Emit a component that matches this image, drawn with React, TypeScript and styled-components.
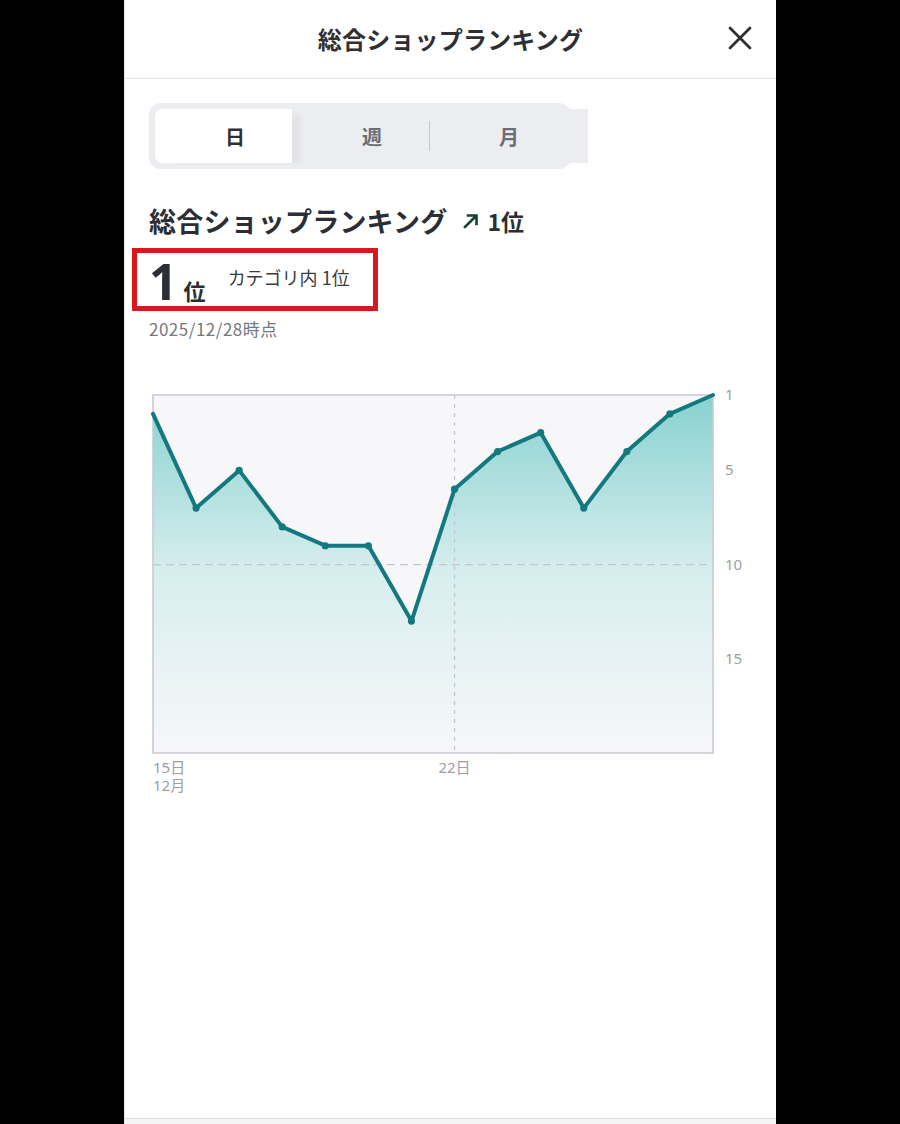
import React from "react";
import styled, { createGlobalStyle } from "styled-components";

const Global = createGlobalStyle`
  html, body { margin: 0; padding: 0; background: #000; }
  body { font-family: "Noto Sans CJK JP", "Noto Sans", sans-serif; }
  * { box-sizing: border-box; }
`;

const Panel = styled.div`
  width: 652px;
  height: 1124px;
  margin: 0 auto;
  background: #fff;
  display: flex;
  flex-direction: column;
  border-left: 1px solid #e6e6e6;
`;

const Header = styled.header`
  height: 79px;
  flex: none;
  border-bottom: 1px solid #e2e2e4;
  display: flex;
  align-items: center;
  justify-content: center;
  position: relative;
`;

const HeaderTitle = styled.h1`
  margin: 0 0 2px;
  font-size: 24px;
  font-weight: 700;
  color: #2f3033;
  letter-spacing: 0.2px;
`;

const CloseButton = styled.button`
  position: absolute;
  right: 21px;
  top: 23px;
  width: 30px;
  height: 30px;
  padding: 0;
  border: none;
  background: none;
  display: flex;
  align-items: center;
  justify-content: center;
`;

const Main = styled.main`
  flex: 1;
  padding: 24px 0 0 24px;
  display: flex;
  flex-direction: column;
  align-items: flex-start;
`;

const SegmentRow = styled.div`
  display: flex;
  align-items: center;
`;

const Track = styled.div`
  position: relative;
  width: 422px;
  height: 66px;
  padding: 6px;
  border-radius: 12px;
  background: #ecedf1;
  display: grid;
  grid-template-columns: 160px 114px 1px 135px;
  align-items: center;
`;

const Stub = styled.div`
  width: 19px;
  height: 54px;
  margin-left: -2px;
  background: #ecedf1;
`;

const Thumb = styled.div`
  position: absolute;
  left: 6px;
  top: 6px;
  width: 137px;
  height: 54px;
  background: #fff;
  border-radius: 8px 0 0 8px;
  box-shadow: 12px 3px 5px -3px rgba(0, 0, 0, 0.04);
`;

const Tab = styled.div<{ $active?: boolean; $shift?: number }>`
  position: relative;
  text-align: center;
  padding-left: ${(p) => p.$shift ?? 0}px;
  font-size: 20px;
  font-weight: 700;
  color: ${(p) => (p.$active ? "#2f3033" : "#6b6d72")};
`;

const Divider = styled.div`
  width: 1px;
  height: 30px;
  background: #c7c8cc;
`;

const TitleRow = styled.div`
  margin-top: 32px;
  display: flex;
  align-items: center;
  gap: 7px;
`;

const SectionTitle = styled.h2`
  margin: 0 8px 0 0;
  font-size: 27px;
  font-weight: 700;
  color: #2b2e35;
  letter-spacing: 0.2px;
`;

const TrendValue = styled.span`
  font-size: 23px;
  font-weight: 700;
  color: #2b2e35;
`;

const RankBox = styled.div`
  margin: 8px 0 0 -17px;
  width: 246px;
  height: 63px;
  border: 5px solid #d7191f;
  padding: 0 0 0 12px;
  display: flex;
  align-items: baseline;
`;

const BigRank = styled.span`
  font-family: "Noto Sans", "Noto Sans CJK JP", sans-serif;
  font-size: 50px;
  font-weight: 700;
  line-height: 56px;
  color: #2b2e35;
`;

const RankUnit = styled.span`
  margin-left: 6px;
  font-size: 22px;
  font-weight: 700;
  color: #2b2e35;
`;

const CategoryRank = styled.span`
  margin-left: 22px;
  font-size: 18px;
  color: #3a3c40;
  align-self: center;
  margin-top: -6px;
`;

const DateText = styled.div`
  margin-top: 5px;
  font-size: 17px;
  letter-spacing: 0.5px;
  color: #76787c;
`;

const ChartSvg = styled.svg`
  margin-top: 39px;
  display: block;
`;

const Footer = styled.footer`
  height: 6px;
  flex: none;
  border-top: 1px solid #dcdcde;
  background: #f5f5f6;
`;

const ranks = [2, 7, 5, 8, 9, 9, 13, 6, 4, 3, 7, 4, 2, 1];
const PL = 4;
const PR = 564;
const PT = 15;
const PB = 373;
const yOf = (r: number) => PT + ((r - 1) * (PB - PT)) / 19;
const xOf = (i: number) => PL + (i * (PR - PL)) / (ranks.length - 1);

function Chart() {
  const pts = ranks.map((r, i) => [xOf(i), yOf(r)] as const);
  const line = pts.map((p) => `${p[0].toFixed(1)},${p[1].toFixed(1)}`).join(" ");
  const area = `${PL},${PB} ${line} ${PR},${PB}`;
  const labelStyle = { fontFamily: '"Noto Sans", "Noto Sans CJK JP", sans-serif', fontSize: 15, fill: "#9c9ea3" };
  return (
    <ChartSvg width={620} height={420} viewBox="0 0 620 420">
      <defs>
        <linearGradient id="fillGrad" x1="0" y1={PT} x2="0" y2={PB} gradientUnits="userSpaceOnUse">
          <stop offset="0" stopColor="#88d2d0" />
          <stop offset="0.5" stopColor="#d8eeee" />
          <stop offset="1" stopColor="#f7f7fa" />
        </linearGradient>
      </defs>
      <rect x={PL} y={PT} width={PR - PL} height={PB - PT} fill="#f7f7fa" />
      <polygon points={area} fill="url(#fillGrad)" />
      <line x1={PL} x2={PR} y1={yOf(10)} y2={yOf(10)} stroke="#c3c6d0" strokeWidth={1.3} strokeDasharray="8 5" />
      <line x1={xOf(7)} x2={xOf(7)} y1={PT} y2={PB + 2} stroke="#c3c6d0" strokeWidth={1.3} strokeDasharray="4 5" />
      <rect x={PL} y={PT} width={PR - PL} height={PB - PT} fill="none" stroke="#c8cbd3" strokeWidth={1.6} />
      <polyline points={line} fill="none" stroke="#14797e" strokeWidth={4} strokeLinejoin="round" strokeLinecap="round" />
      {pts.slice(1, -1).map((p, i) => (
        <circle key={i} cx={p[0]} cy={p[1]} r={3.6} fill="#14797e" />
      ))}
      {[1, 5, 10, 15].map((r) => (
        <text key={r} x={576} y={yOf(r) + 5} style={labelStyle}>
          {r}
        </text>
      ))}
      <text x={PL} y={393} style={labelStyle}>15日</text>
      <text x={PL} y={411} style={labelStyle}>12月</text>
      <text x={xOf(7)} y={393} textAnchor="middle" style={labelStyle}>22日</text>
    </ChartSvg>
  );
}

export default function App() {
  return (
    <>
      <Global />
      <Panel>
        <Header>
          <HeaderTitle>総合ショップランキング</HeaderTitle>
          <CloseButton aria-label="閉じる">
            <svg width="24" height="24" viewBox="0 0 24 24">
              <path d="M2 2 L22 22 M22 2 L2 22" stroke="#2f3033" strokeWidth="2.8" strokeLinecap="round" />
            </svg>
          </CloseButton>
        </Header>
        <Main>
          <SegmentRow>
            <Track>
              <Thumb />
              <Tab $active>日</Tab>
              <Tab>週</Tab>
              <Divider />
              <Tab $shift={23}>月</Tab>
            </Track>
            <Stub />
          </SegmentRow>
          <TitleRow>
            <SectionTitle>総合ショップランキング</SectionTitle>
            <svg width="18" height="18" viewBox="0 0 18 18">
              <path d="M3 15 L14 4 M6 3.5 H14.5 V12" stroke="#163f33" strokeWidth="2.6" fill="none" strokeLinecap="square" />
            </svg>
            <TrendValue>1位</TrendValue>
          </TitleRow>
          <RankBox>
            <BigRank>1</BigRank>
            <RankUnit>位</RankUnit>
            <CategoryRank>カテゴリ内 1位</CategoryRank>
          </RankBox>
          <DateText>2025/12/28時点</DateText>
          <Chart />
        </Main>
        <Footer />
      </Panel>
    </>
  );
}
